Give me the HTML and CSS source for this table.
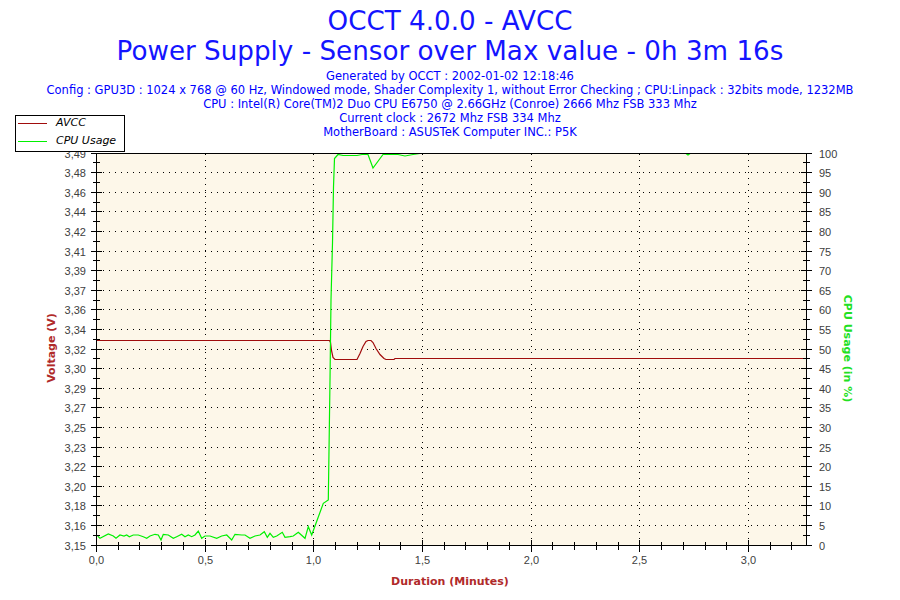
FILE: index.html
```html
<!DOCTYPE html>
<html>
<head>
<meta charset="utf-8">
<title>OCCT 4.0.0 - AVCC</title>
<link rel="stylesheet" href="styles.css">
</head>
<body>
<div class="page">
  <header class="header">
    <h1 class="title">OCCT 4.0.0 - AVCC<br>Power Supply - Sensor over Max value - 0h 3m 16s</h1>
    <div class="info">
      <p>Generated by OCCT : 2002-01-02 12:18:46</p>
      <p>Config : GPU3D : 1024 x 768 @ 60 Hz, Windowed mode, Shader Complexity 1, without Error Checking ; CPU:Linpack : 32bits mode, 1232MB</p>
      <p>CPU : Intel(R) Core(TM)2 Duo CPU E6750 @ 2.66GHz (Conroe) 2666 Mhz FSB 333 Mhz</p>
      <p>Current clock : 2672 Mhz FSB 334 Mhz</p>
      <p>MotherBoard : ASUSTeK Computer INC.: P5K</p>
    </div>
  </header>

  <svg class="chart" width="900" height="460" viewBox="0 140 900 460" xmlns="http://www.w3.org/2000/svg">
    <rect class="plot-bg" x="97" y="154" width="709" height="391"/>

    <path class="grid" d="M97 172.5H806M97 192.5H806M97 211.5H806M97 231.5H806M97 251.5H806M97 270.5H806M97 290.5H806M97 309.5H806M97 329.5H806M97 349.5H806M97 368.5H806M97 388.5H806M97 407.5H806M97 427.5H806M97 447.5H806M97 466.5H806M97 486.5H806M97 505.5H806M97 525.5H806"/>
    <path class="grid" d="M205.5 154V545M313.5 154V545M422.5 154V545M531.5 154V545M639.5 154V545M748.5 154V545"/>

    <polyline class="line-avcc" points="96,340.5 329.5,340.5 330.5,342.5 331.5,350.5 333,357.5 335,359.5 357,359.5 360,353.5 363,346.5 366,341.5 368,340.5 371,340.5 373,342.5 376,348.5 380,354.5 384,358.5 386,359.5 394,359.5 395,358.5 806,358.5"/>

    <polyline class="line-cpu" points="97.7,536 100,538.3 108.3,534 113.3,536 116,538.3 120,535 124,536 126.7,535 129.3,536.7 133.3,535 138.3,535 143.3,536.7 146.7,538.3 150,536 155,534.3 158.3,535 161,540 163.3,534.3 168.3,535 173.3,538.3 176.7,536.7 181.7,534.3 185,536.7 188.3,535 191.7,536.7 195,535 198.3,531 201.7,538.3 205,536 210,536 216.7,538.3 221.7,536 226.7,535 231.7,540 235,534.3 241.7,535 245,535 250,538.3 255,536 260,535 264.3,531.7 267.3,537.3 270,533.3 273.3,537.3 276.7,536 282.3,532.3 285,537.3 290,536.7 293.3,536 298.3,532.3 305,538.3 308.3,526.7 311.7,535 323.3,503.3 328.3,500 330,380 331,300 332.5,243 333.5,187 334.5,158.5 338,154.5 343,155.5 352,155.5 357,155.5 362,154.5 368,154.5 373,168 383,154.5 398,154.5 405,156 413,154.5 420,153.5 686,153.5 688,155 690,153.5 806,153.5"/>

    <path class="axis" d="M96.5 153V546M806.5 153V546M96 153.5H807M96 545.5H807"/>

    <path class="axis" d="M91 153.5H102M91 172.5H102M91 192.5H102M91 211.5H102M91 231.5H102M91 251.5H102M91 270.5H102M91 290.5H102M91 309.5H102M91 329.5H102M91 349.5H102M91 368.5H102M91 388.5H102M91 407.5H102M91 427.5H102M91 447.5H102M91 466.5H102M91 486.5H102M91 505.5H102M91 525.5H102M91 545.5H102"/>
    <path class="axis" d="M93 162.5H100M93 182.5H100M93 202.5H100M93 221.5H100M93 241.5H100M93 260.5H100M93 280.5H100M93 300.5H100M93 319.5H100M93 339.5H100M93 358.5H100M93 378.5H100M93 398.5H100M93 417.5H100M93 437.5H100M93 456.5H100M93 476.5H100M93 496.5H100M93 515.5H100M93 535.5H100"/>

    <path class="axis" d="M801 153.5H812M801 172.5H812M801 192.5H812M801 211.5H812M801 231.5H812M801 251.5H812M801 270.5H812M801 290.5H812M801 309.5H812M801 329.5H812M801 349.5H812M801 368.5H812M801 388.5H812M801 407.5H812M801 427.5H812M801 447.5H812M801 466.5H812M801 486.5H812M801 505.5H812M801 525.5H812M801 545.5H812"/>
    <path class="axis" d="M803 162.5H810M803 182.5H810M803 202.5H810M803 221.5H810M803 241.5H810M803 260.5H810M803 280.5H810M803 300.5H810M803 319.5H810M803 339.5H810M803 358.5H810M803 378.5H810M803 398.5H810M803 417.5H810M803 437.5H810M803 456.5H810M803 476.5H810M803 496.5H810M803 515.5H810M803 535.5H810"/>

    <path class="axis" d="M96.5 540V552M205.5 540V552M313.5 540V552M422.5 540V552M531.5 540V552M639.5 540V552M748.5 540V552"/>
    <path class="axis" d="M118.5 542V550M139.5 542V550M161.5 542V550M183.5 542V550M226.5 542V550M248.5 542V550M270.5 542V550M292.5 542V550M335.5 542V550M357.5 542V550M379.5 542V550M400.5 542V550M444.5 542V550M465.5 542V550M487.5 542V550M509.5 542V550M552.5 542V550M574.5 542V550M596.5 542V550M618.5 542V550M661.5 542V550M683.5 542V550M705.5 542V550M726.5 542V550M770.5 542V550M791.5 542V550"/>

    <g class="tick-label left-labels">
      <text x="86" y="157.5">3,49</text>
      <text x="86" y="176.5">3,48</text>
      <text x="86" y="196.5">3,46</text>
      <text x="86" y="215.5">3,44</text>
      <text x="86" y="235.5">3,42</text>
      <text x="86" y="255.5">3,41</text>
      <text x="86" y="274.5">3,39</text>
      <text x="86" y="294.5">3,37</text>
      <text x="86" y="313.5">3,36</text>
      <text x="86" y="333.5">3,34</text>
      <text x="86" y="353.5">3,32</text>
      <text x="86" y="372.5">3,30</text>
      <text x="86" y="392.5">3,29</text>
      <text x="86" y="411.5">3,27</text>
      <text x="86" y="431.5">3,25</text>
      <text x="86" y="451.5">3,23</text>
      <text x="86" y="470.5">3,22</text>
      <text x="86" y="490.5">3,20</text>
      <text x="86" y="509.5">3,18</text>
      <text x="86" y="529.5">3,16</text>
      <text x="86" y="549.5">3,15</text>
    </g>
    <g class="tick-label right-labels">
      <text x="819" y="157.5">100</text>
      <text x="819" y="176.5">95</text>
      <text x="819" y="196.5">90</text>
      <text x="819" y="215.5">85</text>
      <text x="819" y="235.5">80</text>
      <text x="819" y="255.5">75</text>
      <text x="819" y="274.5">70</text>
      <text x="819" y="294.5">65</text>
      <text x="819" y="313.5">60</text>
      <text x="819" y="333.5">55</text>
      <text x="819" y="353.5">50</text>
      <text x="819" y="372.5">45</text>
      <text x="819" y="392.5">40</text>
      <text x="819" y="411.5">35</text>
      <text x="819" y="431.5">30</text>
      <text x="819" y="451.5">25</text>
      <text x="819" y="470.5">20</text>
      <text x="819" y="490.5">15</text>
      <text x="819" y="509.5">10</text>
      <text x="819" y="529.5">5</text>
      <text x="819" y="549.5">0</text>
    </g>
    <g class="tick-label bottom-labels">
      <text x="96.5" y="564">0,0</text>
      <text x="205.5" y="564">0,5</text>
      <text x="313.5" y="564">1,0</text>
      <text x="422.5" y="564">1,5</text>
      <text x="531.5" y="564">2,0</text>
      <text x="639.5" y="564">2,5</text>
      <text x="748.5" y="564">3,0</text>
    </g>

    <text class="axis-title title-red" transform="translate(55,348) rotate(-90)">Voltage (V)</text>
    <text class="axis-title title-green" transform="translate(844,348.5) rotate(90)">CPU Usage (in %)</text>
    <text class="axis-title title-red" x="450" y="585">Duration (Minutes)</text>
  </svg>

  <div class="legend">
    <div class="legend-row"><span class="swatch swatch-avcc"></span><span class="legend-label">AVCC</span></div>
    <div class="legend-row"><span class="swatch swatch-cpu"></span><span class="legend-label">CPU Usage</span></div>
  </div>
</div>
</body>
</html>
```

FILE: styles.css
```css
html, body {
  margin: 0;
  padding: 0;
  background: #ffffff;
}

.page {
  position: relative;
  width: 900px;
  height: 600px;
  overflow: hidden;
  background: #ffffff;
}

.header {
  height: 140px;
  box-sizing: border-box;
  padding-top: 6px;
  text-align: center;
  color: #0000ff;
}

.title {
  margin: 0;
  font-family: "DejaVu Sans", Verdana, sans-serif;
  font-weight: normal;
  font-size: 26.2px;
  line-height: 30px;
  color: #1414ff;
}

.info {
  margin-top: 3px;
  font-family: "DejaVu Sans", Verdana, sans-serif;
  font-size: 11.5px;
  line-height: 14px;
  color: #0000ff;
}

.info p {
  margin: 0;
  white-space: nowrap;
}

.chart {
  display: block;
}

.plot-bg {
  fill: #fdf7e9;
}

.grid {
  fill: none;
  stroke: #000000;
  stroke-width: 1;
  stroke-dasharray: 1 5;
  shape-rendering: crispEdges;
}

.axis {
  fill: none;
  stroke: #000000;
  stroke-width: 1;
  shape-rendering: crispEdges;
}

.line-avcc {
  fill: none;
  stroke: #a00c0c;
  stroke-width: 1.2;
}

.line-cpu {
  fill: none;
  stroke: #00f000;
  stroke-width: 1.2;
}

.tick-label {
  font-family: "Liberation Sans", Arial, sans-serif;
  font-size: 11px;
  fill: #404040;
}

.left-labels {
  text-anchor: end;
}

.right-labels {
  text-anchor: start;
}

.bottom-labels {
  text-anchor: middle;
}

.axis-title {
  font-family: "DejaVu Sans", Verdana, sans-serif;
  font-weight: bold;
  font-size: 11px;
  text-anchor: middle;
}

.title-red {
  fill: #b02a2a;
}

.title-green {
  fill: #22e022;
}

.legend {
  position: absolute;
  left: 15px;
  top: 115px;
  width: 108px;
  height: 35px;
  border: 1px solid #000000;
  background: #ffffff;
  display: flex;
  flex-direction: column;
  gap: 4px;
}

.legend-row {
  display: flex;
  align-items: center;
  gap: 9px;
  height: 14px;
  padding-left: 2px;
}

.swatch {
  display: block;
  width: 29px;
  height: 1px;
}

.swatch-avcc {
  background: #a00c0c;
}

.swatch-cpu {
  background: #00f000;
}

.legend-label {
  font-family: "DejaVu Sans", Verdana, sans-serif;
  font-style: italic;
  font-size: 11px;
  line-height: 14px;
  color: #000000;
}
```
